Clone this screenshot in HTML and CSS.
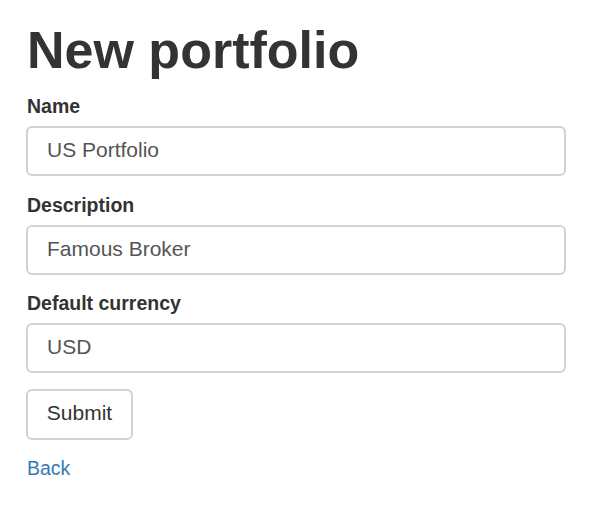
FILE: index.html
```html
<!DOCTYPE html>
<html lang="en">
<head>
<meta charset="utf-8">
<title>New portfolio</title>
<link rel="stylesheet" href="styles.css">
</head>
<body>
<div class="container">
  <h1 class="title">New portfolio</h1>
  <form class="form">
    <div class="form-group">
      <label class="label" for="name">Name</label>
      <input class="input" id="name" type="text" value="US Portfolio">
    </div>
    <div class="form-group">
      <label class="label" for="description">Description</label>
      <input class="input" id="description" type="text" value="Famous Broker">
    </div>
    <div class="form-group">
      <label class="label" for="currency">Default currency</label>
      <input class="input" id="currency" type="text" value="USD">
    </div>
    <button class="btn" type="button">Submit</button>
  </form>
  <a class="link" href="#">Back</a>
</div>
</body>
</html>
```

FILE: styles.css
```css
html, body {
  margin: 0;
  padding: 0;
  background: #ffffff;
}

body {
  font-family: "Liberation Sans", Arial, Helvetica, sans-serif;
  color: #333333;
}

.container {
  width: 540px;
  padding: 0 26px;
  display: flex;
  flex-direction: column;
  align-items: flex-start;
}

.title {
  margin: 21px 0 12px 1px;
  font-size: 52px;
  line-height: 59px;
  font-weight: bold;
  color: #333333;
}

.form {
  display: flex;
  flex-direction: column;
  align-items: flex-start;
  width: 100%;
}

.form-group {
  display: flex;
  flex-direction: column;
  width: 100%;
  margin-bottom: 14.5px;
}

.label {
  font-size: 19.5px;
  line-height: 28px;
  font-weight: bold;
  margin: 0 0 6px 1px;
  color: #333333;
}

.input {
  box-sizing: border-box;
  width: 100%;
  height: 50px;
  margin: 0;
  padding: 0 18px 2px 19px;
  border: 2px solid #d2d2d2;
  border-radius: 6px;
  font-family: "Liberation Sans", Arial, Helvetica, sans-serif;
  font-size: 21px;
  color: #555555;
  background: #ffffff;
  outline: none;
}

.btn {
  box-sizing: border-box;
  height: 51px;
  width: 107px;
  margin: 1px 0 0 0;
  padding: 0 0 2px 0;
  border: 2px solid #d2d2d2;
  border-radius: 6px;
  background: #ffffff;
  font-family: "Liberation Sans", Arial, Helvetica, sans-serif;
  font-size: 21px;
  color: #333333;
}

.link {
  margin: 14px 0 0 1px;
  font-size: 19.5px;
  line-height: 28px;
  color: #337ab7;
  text-decoration: none;
}
```
